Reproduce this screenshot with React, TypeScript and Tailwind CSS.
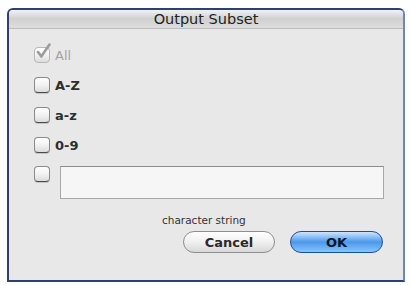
import React from "react";

function Box({ checked = false, disabled = false }: { checked?: boolean; disabled?: boolean }) {
    return (
        <div className="relative w-[16px] h-[16px] shrink-0">
            <div
                className={
                    "w-[16px] h-[16px] rounded-[4px] border bg-gradient-to-b from-white via-[#f2f2f2] to-[#dcdcdc] " +
                    (disabled
                        ? "border-[#b8b8b8]"
                        : "border-[#8a8a8a] border-b-[#4a4a4a] shadow-[0_1px_0_#c4c4c4]")
                }
            />
            {checked && (
                <svg className="absolute left-[1px] -top-[4px]" width="17" height="17" viewBox="0 0 17 17">
                    <path d="M3 9 L6.3 13.5 L14.5 1.5" fill="none" stroke="#9c9c9c" strokeWidth="2.6" strokeLinecap="round" strokeLinejoin="round" />
                </svg>
            )}
        </div>
    );
}

function Row({ label, checked, disabled }: { label: string; checked?: boolean; disabled?: boolean }) {
    return (
        <div className="h-[30px] flex items-center gap-[5px]">
            <Box checked={checked} disabled={disabled} />
            <span
                className={
                    "text-[13px] leading-none " +
                    (disabled ? "text-[#a4a4a4]" : "text-[#2e2e2e] font-bold")
                }
            >
                {label}
            </span>
        </div>
    );
}

export default function App() {
    return (
        <div className="w-[412px] h-[285px] bg-white pt-[8px] pl-[7px]" style={{ fontFamily: '"DejaVu Sans", "Liberation Sans", sans-serif' }}>
            <div className="w-[398px] h-[274px] rounded-t-[6px] border-2 border-[#2f4070] border-r-[#6d86b8] bg-[#e8e8e8] flex flex-col overflow-hidden">
                {/* Title bar */}
                <div className="h-[19px] shrink-0 flex items-center justify-center bg-gradient-to-b from-[#f2f2f2] via-[#d0d0d0] to-[#dedede] border-b border-[#bcbcbc]">
                    <span className="text-[14.5px] text-[#222] leading-none">Output Subset</span>
                </div>

                {/* Body */}
                <div className="flex flex-col pt-[11px] pl-[25px]">
                    <Row label="All" checked disabled />
                    <Row label="A-Z" />
                    <Row label="a-z" />
                    <Row label="0-9" />

                    <div className="flex items-start gap-[10px] mt-[6px]">
                        <Box />
                        <div className="w-[324px] h-[33px] bg-[#f6f6f6] border border-[#a8a8a8] border-t-[#8c8c8c]" />
                    </div>

                    <div className="mt-[15px] pl-[128px] text-[10.5px] leading-[13px] text-[#333]">character string</div>

                    <div className="flex justify-end gap-[15px] pr-[20px] mt-[4px]">
                        <button className="w-[92px] h-[22px] rounded-full border border-[#8e8e8e] bg-gradient-to-b from-white via-[#f0f0f0] to-[#d8d8d8] text-[13px] text-[#2a2a2a] font-bold leading-none">
                            Cancel
                        </button>
                        <button className="w-[93px] h-[22px] rounded-full border border-[#1f4f99] bg-gradient-to-b from-[#cde6ff] via-[#4a98ea] to-[#86c4ff] text-[13px] text-[#0c1626] font-bold leading-none">
                            OK
                        </button>
                    </div>
                </div>
            </div>
        </div>
    );
}
